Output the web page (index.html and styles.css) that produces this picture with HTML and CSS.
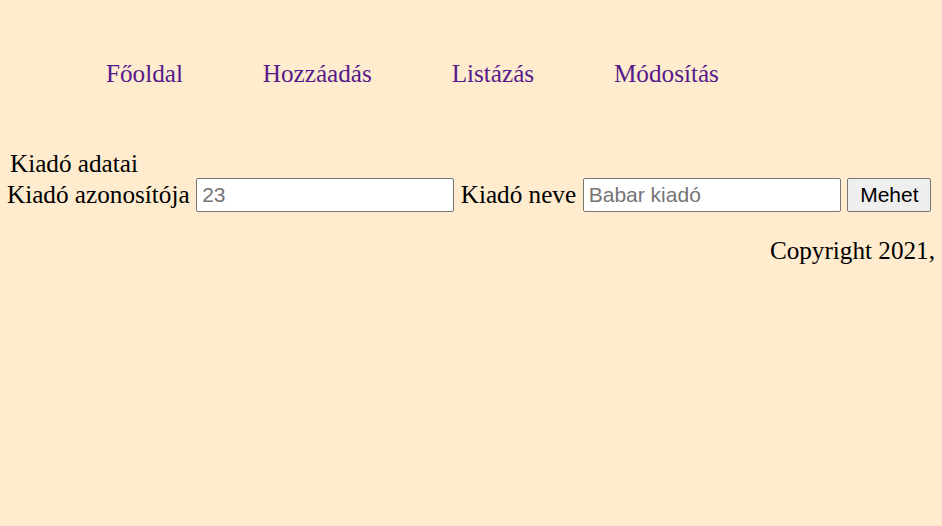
FILE: index.html
```html
<!DOCTYPE html>
<html lang="hu">
<head>
<meta charset="utf-8">
<title>Kiadó</title>
<link rel="stylesheet" href="styles.css">
</head>
<body>
<nav class="nav">
  <a href="#" class="nav-link">Főoldal</a>
  <a href="#" class="nav-link">Hozzáadás</a>
  <a href="#" class="nav-link">Listázás</a>
  <a href="#" class="nav-link">Módosítás</a>
</nav>
<form class="form">
  <div class="legend">Kiadó adatai</div>
  <div class="row">
    <label class="label">Kiadó azonosítója</label>
    <input class="field" type="text" placeholder="23">
    <label class="label">Kiadó neve</label>
    <input class="field" type="text" placeholder="Babar kiadó">
    <button class="btn" type="button">Mehet</button>
  </div>
</form>
<footer class="footer">Copyright 2021,</footer>
</body>
</html>
```
FILE: styles.css
```css
html, body {
  background: #ffebcd;
}
body {
  margin: 0;
  padding: 0 7px 0 7px;
  font-family: "Liberation Serif", "Times New Roman", serif;
  font-size: 25.2px;
  color: #000;
}
.nav {
  display: flex;
  gap: 79.8px;
  padding: 49px 0 0 99px;
  height: 50px;
  align-items: center;
  font-size: 25.2px;
}
.nav-link {
  color: #551a8b;
  text-decoration: none;
}
.form {
  margin-top: 50px;
}
.legend {
  padding-left: 3px;
  line-height: 29px;
}
.row {
  display: flex;
  align-items: center;
  gap: 6.6px;
}
.label {
  line-height: 34px;
}
.field {
  box-sizing: border-box;
  width: 258px;
  height: 34px;
  font-family: "Liberation Sans", Arial, sans-serif;
  font-size: 21px;
  padding: 2px 5px;
  border: 1px solid #767676;
  border-radius: 2px;
  background: #fff;
}
.field::placeholder {
  color: #757575;
}
.btn {
  box-sizing: border-box;
  width: 84px;
  height: 34px;
  padding: 0;
  font-family: "Liberation Sans", Arial, sans-serif;
  font-size: 21px;
  background: #efefef;
  border: 1px solid #767676;
  border-radius: 2px;
  color: #000;
}
.footer {
  text-align: right;
  margin-top: 22px;
  line-height: 34px;
}
```
